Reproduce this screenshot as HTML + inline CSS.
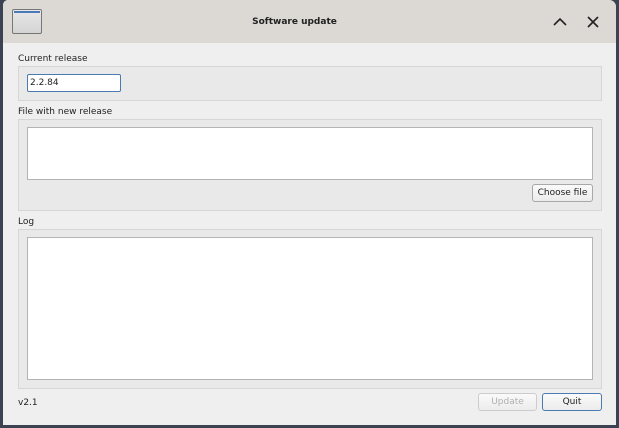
<!DOCTYPE html>
<html><head><style>
*{box-sizing:border-box;margin:0;padding:0}
body{width:619px;height:428px;background:#3b4252;position:relative;overflow:hidden;font-family:"DejaVu Sans","Liberation Sans",sans-serif;font-size:9px;color:#222}
.win{position:absolute;left:3px;top:0;width:613px;height:425px;background:#efefef;border-radius:5px 7px 0 0;overflow:hidden}
.title{position:absolute;left:0;top:0;width:613px;height:43px;background:#dcd8d4}
.icon{position:absolute;left:9px;top:9px;width:30px;height:25px;border:1px solid #777;border-radius:2px;background:linear-gradient(#e8e8e8,#d4d4d4)}
.icon:before{content:"";position:absolute;left:1px;right:1px;top:1px;height:2px;background:#4a7ab8}
.ttl{position:absolute;left:0;width:583px;top:17px;text-align:center;font-weight:bold;font-size:9px}
.a{position:absolute;font-size:9px}
.frame{position:absolute;border:1px solid #d6d6d6;background:#e9e9e9}
.box{position:absolute;background:#fff;border:1px solid #b4b4b4}
.btn{position:absolute;border:1px solid #a8a8a8;border-radius:3px;background:linear-gradient(#fafafa,#ececec);text-align:center;font-size:9px;line-height:17px}
</style></head><body>
<div class="win">
<div class="title"><div class="icon"></div><div class="ttl">Software update</div>
<svg style="position:absolute;left:550px;top:17px" width="14" height="10"><path d="M1 8 L7 2 L13 8" stroke="#222" stroke-width="1.6" fill="none"/></svg>
<svg style="position:absolute;left:584px;top:16px" width="12" height="12"><path d="M1 1 L11 11 M11 1 L1 11" stroke="#222" stroke-width="1.6" fill="none"/></svg>
</div>
<div class="a" style="left:15px;top:54px">Current release</div>
<div class="frame" style="left:15px;top:66px;width:584px;height:35px"></div>
<div class="box" style="left:24px;top:74px;width:94px;height:18px;border-color:#4a7ab0;border-radius:2px;padding:3px 2px;font-size:9px">2.2.84</div>
<div class="a" style="left:15px;top:107px">File with new release</div>
<div class="frame" style="left:15px;top:119px;width:584px;height:92px"></div>
<div class="box" style="left:24px;top:127px;width:566px;height:53px"></div>
<div class="btn" style="left:529px;top:184px;width:61px;height:18px">Choose file</div>
<div class="a" style="left:15px;top:217px">Log</div>
<div class="frame" style="left:15px;top:229px;width:584px;height:160px"></div>
<div class="box" style="left:24px;top:237px;width:566px;height:143px"></div>
<div class="a" style="left:15px;top:398px">v2.1</div>
<div class="btn" style="left:475px;top:393px;width:59px;height:18px;color:#b0b0b0;border-color:#ccc">Update</div>
<div class="btn" style="left:539px;top:393px;width:60px;height:18px;border-color:#4a7ab0">Quit</div>
</div>
</body></html>
